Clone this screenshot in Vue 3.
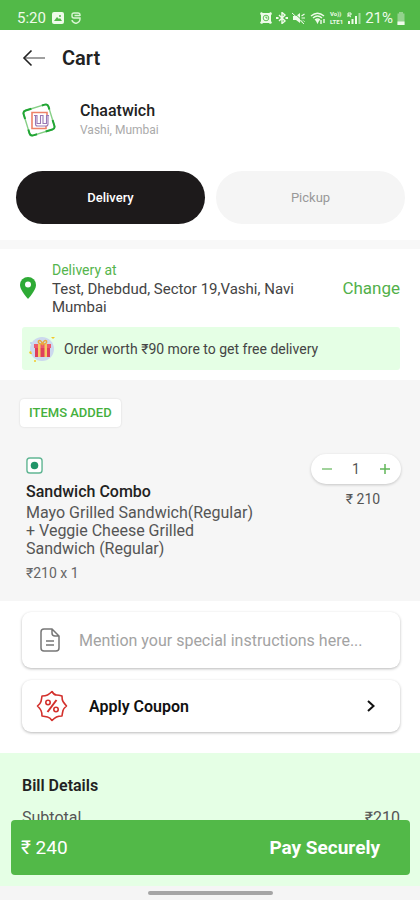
<template>
  <div class="page">
    <!-- 状态栏 -->
    <div class="status-bar">
      <div class="status-group">
        <span class="time">5:20</span>
        <svg class="icon-12" viewBox="0 0 12 12">
          <rect width="12" height="12" rx="2" fill="#effbea" />
          <path d="M2 9l3-4 2 2 1-1 2 3z" fill="#52b948" />
          <circle cx="8" cy="4" r="1" fill="#52b948" />
        </svg>
        <svg class="icon-12" viewBox="0 0 12 12" fill="none" stroke="#d9f5d3" stroke-width="1.4">
          <path d="M10 4V3Q10 1 8 1H4Q2 1 2 3v1q0 2 2 2h6v1q0 3-4 4.500Q2 10 2 8M4.500 3.500H10" />
        </svg>
      </div>
      <div class="status-group right">
        <svg class="icon-12" viewBox="0 0 12 12">
          <path d="M1 0l2 1h6l2-1 1 2-1 1v6l1 2-2 1-1-1H3l-1 1-2-1 1-2V3L0 2z" fill="#effbea" />
          <circle cx="6" cy="6" r="2.800" fill="none" stroke="#52b948" stroke-width="0.900" />
          <path d="M6 4.500V6h1.500" fill="none" stroke="#52b948" />
        </svg>
        <svg class="icon-12" viewBox="0 0 12 12" fill="none" stroke="#effbea" stroke-width="1.4">
          <path d="M3 3l6 6-3 2.500v-11L9 3 3 9" />
          <path d="M0 6h2.500M9.500 6H12" stroke-width="2" />
        </svg>
        <svg class="icon-14" viewBox="0 0 14 12">
          <path d="M1 4h3l4-3v10L4 8H1z" fill="#effbea" />
          <path d="M9.500 4l3-2M9.500 6H13M9.500 8l3 2" fill="none" stroke="#effbea" stroke-width="1.2" />
          <path d="M1 0l12 11" stroke="#52b948" stroke-width="1" />
          <path d="M0 1l12 11" stroke="#effbea" stroke-width="1" />
        </svg>
        <svg class="icon-16" viewBox="0 0 16 12" fill="none" stroke="#effbea" stroke-width="1.4">
          <path d="M1 4q6.500-5.500 13 0M3 6q4.500-4 9 0M5 8q2.500-2 5 0" />
          <path d="M6.500 8.500l1 2 1-2z" fill="#effbea" />
          <path d="M11 8v4M14 7v4" />
        </svg>
        <span class="lte"><span>Vo))</span><span>LTE1</span></span>
        <svg class="icon-14" viewBox="0 0 14 12">
          <path d="M1 5V1h3v2H1l3 2" fill="none" stroke="#effbea" />
          <path d="M1 9h2v3H1zM4.500 7h2v5h-2zM8 4h2v8H8z" fill="#effbea" />
          <path d="M11.500 1h2v11h-2z" fill="#a8dca3" />
        </svg>
        <span class="battery-text">21%</span>
        <svg class="icon-8" viewBox="0 0 8 13">
          <path d="M2 0h4v1.500h1.500V13h-7V1.500H2z" fill="#93d28d" />
          <path d="M.5 9.500h7V13h-7z" fill="#effbea" />
        </svg>
      </div>
    </div>

    <!-- 顶部标题 -->
    <header class="header">
      <button class="back" aria-label="Back">
        <svg viewBox="0 0 24 18" fill="none" stroke-width="1.6">
          <path d="M3 9h20" stroke="#888" />
          <path d="M9.500 1.500L2 9l7.500 7.500" stroke="#222" />
        </svg>
      </button>
      <h1>Cart</h1>
    </header>

    <section class="store">
      <svg class="logo" viewBox="0 0 34 34" fill="none">
        <g transform="rotate(-17 17 17)">
          <rect x="4" y="4" width="26" height="26" rx="3" stroke="#86cf86" stroke-width="1.4" />
          <path d="M4 12V7q0-3 3-3h6M24 4h3q3 0 3 3v3M30 21v6q0 3-3 3h-7M11 30H7q-3 0-3-3v-4" stroke="#21a534" stroke-width="2" />
        </g>
        <path d="M25 13V9.500H10v16h14V23" stroke="#ee8268" stroke-width="1.6" />
        <path d="M12 12.500h3v8h3.500v-8H21v8h3.500v-8H27M13.500 13v8q0 2 2 2H24q2 0 2-2v-8" stroke="#9a78b4" stroke-width="1.1" />
      </svg>
      <div>
        <h2 class="store-name">Chaatwich</h2>
        <p class="store-area">Vashi, Mumbai</p>
      </div>
    </section>

    <div class="tabs">
      <button
        v-for="tab in tabs"
        :key="tab"
        class="tab"
        :class="{ active: tab === currentTab }"
        @click="currentTab = tab"
      >
        {{ tab }}
      </button>
    </div>

    <!-- 配送地址 -->
    <section class="delivery">
      <div class="address-row">
        <svg class="pin" viewBox="0 0 16 22">
          <path d="M8 0a8 8 0 0 0-8 8c0 5.500 8 14 8 14s8-8.500 8-14a8 8 0 0 0-8-8z" fill="#2eaa35" />
          <circle cx="8" cy="7.500" r="3" fill="#fff" />
        </svg>
        <div class="address">
          <p class="address-label">Delivery at</p>
          <p class="address-text">Test, Dhebdud, Sector 19,Vashi, Navi Mumbai</p>
        </div>
        <button class="change">Change</button>
      </div>
      <div class="offer">
        <svg class="gift" viewBox="0 0 28 28">
          <circle cx="14" cy="14" r="12" fill="#ccd9ee" />
          <path d="M7 12h15v10H7z" fill="#de3f5b" />
          <path d="M6 9h17v4H6z" fill="#ec5a6c" />
          <path d="M10 9h2.500v13H10zM16.500 9H19v13h-2.500z" fill="#f4cb62" />
          <path d="M14.500 9q-5 0-4-3 2-2 4 3 2-5 4-3 1 3-4 3z" fill="none" stroke="#eaa83c" stroke-width="1.5" />
          <path d="M23 2h4l-2 2zM1 17l2-1 1 3H2z" fill="#f2c928" />
          <circle cx="7" cy="26" r="1" fill="#f2c928" />
          <circle cx="3" cy="8" r="1" fill="#b8d2ee" />
        </svg>
        <span>Order worth ₹90 more to get free delivery</span>
      </div>
    </section>

    <!-- 已添加商品 -->
    <section class="items">
      <span class="chip">ITEMS ADDED</span>
      <div class="item">
        <div class="item-info">
          <svg class="veg" viewBox="0 0 18 18">
            <rect x="1" y="1" width="16" height="16" rx="3" fill="#fff" stroke="#62b694" stroke-width="1.5" />
            <circle cx="9" cy="9" r="4" fill="#209568" />
          </svg>
          <h3 class="item-name">Sandwich Combo</h3>
          <p class="item-desc">Mayo Grilled Sandwich(Regular) + Veggie Cheese Grilled Sandwich (Regular)</p>
          <p class="item-price">₹{{ price }} x {{ count }}</p>
        </div>
        <div class="item-side">
          <div class="stepper">
            <button aria-label="Decrease" @click="decrease">
              <svg viewBox="0 0 10 10"><path d="M0 5h10" stroke="#82c47b" stroke-width="1.5" /></svg>
            </button>
            <span>{{ count }}</span>
            <button aria-label="Increase" @click="count++">
              <svg viewBox="0 0 10 10"><path d="M0 5h10M5 0v10" stroke="#62b65a" stroke-width="1.5" /></svg>
            </button>
          </div>
          <span class="total">₹ {{ subtotal }}</span>
        </div>
      </div>
    </section>

    <section class="extras">
      <label class="card note">
        <svg class="doc" viewBox="0 0 20 24" fill="none" stroke="#777" stroke-width="1.5">
          <path d="M12 1H4Q1 1 1 4v16q0 3 3 3h12q3 0 3-3V8zM12 1v4q0 3 3 3h4M6 13h8M6 17h8" />
        </svg>
        <input
          v-model="note"
          type="text"
          aria-label="Special instructions"
          placeholder="Mention your special instructions here..."
        />
      </label>
      <button class="card coupon">
        <svg class="badge" viewBox="0 0 32 32" fill="none" stroke="#d3302c" stroke-width="1.6">
          <path d="M16 1.500Q18 5 20.500 5T26 6q0 4 1 5.500t3.500 4.500Q27.500 18.500 27 20.500T26 26q-3.500 0-5.500 1T16 30.500Q14 27.500 11.500 27T6 26q0-3.500-1-5.500T1.500 16Q4.500 13.500 5 11.500T6 6q3.500 0 5.500-1T16 1.500z" stroke-linejoin="round" />
          <path d="M20.500 10l-9 12" stroke-width="2" />
          <circle cx="12" cy="12.500" r="2.200" />
          <circle cx="20" cy="19.500" r="2.200" />
        </svg>
        <span class="coupon-text">Apply Coupon</span>
        <svg class="chevron" viewBox="0 0 8 12" fill="none" stroke="#111" stroke-width="2">
          <path d="M1 1l5.500 5L1 11" />
        </svg>
      </button>
    </section>

    <!-- 账单 -->
    <section class="bill">
      <h3>Bill Details</h3>
      <div class="bill-row">
        <span>Subtotal</span>
        <span>₹{{ subtotal }}</span>
      </div>
    </section>

    <!-- 底部支付按钮 -->
    <div class="footer">
      <button class="pay">
        <span class="pay-amount">₹ {{ subtotal + charges }}</span>
        <span class="pay-text">Pay Securely</span>
      </button>
      <div class="nav"><span class="nav-handle"></span></div>
    </div>
  </div>
</template>

<script setup>
import { ref, computed } from 'vue'

const tabs = ['Delivery', 'Pickup']
const currentTab = ref('Delivery')

const price = 210
const charges = 30 // 配送及其他费用
const count = ref(1)
const note = ref('')

const subtotal = computed(() => price * count.value)

function decrease() {
  if (count.value > 1) count.value--
}
</script>

<style>
body {
  margin: 0;
  background: #fff;
}
</style>

<style scoped>
.page {
  display: flex;
  flex-direction: column;
  min-height: 100vh;
  font-family: Roboto, "Liberation Sans", sans-serif;
  color: #222;
}

h1,
h2,
h3,
p {
  margin: 0;
}

button {
  padding: 0;
  border: none;
  background: none;
  font-family: inherit;
  color: inherit;
  cursor: pointer;
}

svg {
  display: block;
  flex-shrink: 0;
}

/* 状态栏 */
.status-bar {
  display: flex;
  justify-content: space-between;
  align-items: center;
  box-sizing: border-box;
  height: 30px;
  padding: 6px 15px 0 17px;
  background: #52b948;
  color: #effbea;
}

.status-group {
  display: flex;
  align-items: center;
  gap: 6px;
}

.status-group.right {
  gap: 4px;
}

.time,
.battery-text {
  font-size: 15px;
  line-height: 18px;
}

.icon-8 {
  width: 8px;
  height: 13px;
}

.icon-12 {
  width: 12px;
  height: 12px;
}

.icon-14 {
  width: 14px;
  height: 12px;
}

.icon-16 {
  width: 16px;
  height: 12px;
}

.lte {
  display: flex;
  flex-direction: column;
  font-size: 6px;
  line-height: 8px;
  font-weight: 700;
}

/* 标题 */
.header {
  display: flex;
  align-items: center;
  gap: 16px;
  height: 55px;
  padding: 0 22px;
}

.back svg {
  width: 24px;
  height: 18px;
}

h1 {
  font-size: 20px;
  line-height: 24px;
  font-weight: 600;
}

.store {
  display: flex;
  align-items: center;
  gap: 24px;
  padding: 16px 22px 0;
}

.logo {
  width: 34px;
  height: 34px;
}

.store-name {
  font-size: 16px;
  line-height: 20px;
  font-weight: 500;
}

.store-area {
  font-size: 12px;
  line-height: 18px;
  color: #aaa;
}

.tabs {
  display: flex;
  gap: 11px;
  padding: 32px 15px 16px 16px;
}

.tab {
  flex: 1;
  height: 53px;
  border-radius: 27px;
  background: #f5f5f5;
  font-size: 13px;
  color: #999;
}

.tab.active {
  background: #1d1a1b;
  color: #fff;
  font-weight: 500;
}

/* 地址 */
.delivery {
  padding: 11px 20px 10px;
  border-top: 9px solid #f8f8f8;
}

.address-row {
  display: flex;
  align-items: center;
  gap: 16px;
}

.pin {
  width: 16px;
  height: 22px;
}

.address {
  flex: 1;
}

.address-label {
  font-size: 14px;
  line-height: 20px;
  color: #55b54d;
}

.address-text {
  font-size: 15px;
  line-height: 18px;
  color: #444;
}

.change {
  font-size: 17px;
  color: #52b04a;
}

.offer {
  display: flex;
  align-items: center;
  gap: 8px;
  height: 43px;
  margin: 11px 0 0 2px;
  padding-left: 6px;
  border-radius: 3px;
  background: #e5ffe5;
  font-size: 14px;
  color: #444;
}

.gift {
  width: 28px;
  height: 28px;
}

/* 商品 */
.items {
  padding: 19px 19px 19px 20px;
  background: #f6f6f6;
}

.chip {
  display: inline-block;
  padding: 0 9px;
  border-radius: 4px;
  background: #fff;
  box-shadow: 0 0 2px rgba(0, 0, 0, 0.15);
  font-size: 13px;
  line-height: 28px;
  font-weight: 500;
  color: #45b03d;
}

.item {
  display: flex;
  justify-content: space-between;
  margin-top: 27px;
  padding-left: 6px;
}

.item-info {
  width: 232px;
  padding-top: 3px;
}

.veg {
  width: 17px;
  height: 17px;
}

.item-name {
  margin-top: 8px;
  font-size: 16px;
  line-height: 20px;
  font-weight: 500;
}

.item-desc {
  margin-top: 2px;
  font-size: 16px;
  line-height: 18px;
  color: #555;
}

.item-price {
  margin-top: 6px;
  font-size: 14px;
  line-height: 18px;
  color: #666;
}

.item-side {
  display: flex;
  flex-direction: column;
  align-items: center;
  gap: 6px;
}

.stepper {
  display: flex;
  align-items: center;
  justify-content: space-between;
  box-sizing: border-box;
  width: 90px;
  height: 30px;
  padding: 0 11px;
  border-radius: 15px;
  background: #fff;
  box-shadow: 0 1px 3px rgba(0, 0, 0, 0.2);
  font-size: 14px;
  color: #555;
}

.stepper svg {
  width: 10px;
  height: 10px;
}

.total {
  padding-left: 14px;
  font-size: 14px;
  line-height: 18px;
  color: #555;
}

/* 备注与优惠券 */
.extras {
  display: flex;
  flex-direction: column;
  gap: 12px;
  padding: 11px 20px 21px 22px;
}

.card {
  display: flex;
  align-items: center;
  box-sizing: border-box;
  width: 100%;
  border-radius: 9px;
  background: #fff;
  box-shadow: 0 1px 3px rgba(0, 0, 0, 0.28);
}

.note {
  gap: 19px;
  height: 56px;
  padding: 0 18px;
}

.doc {
  width: 20px;
  height: 24px;
}

.note input {
  flex: 1;
  min-width: 0;
  padding: 0;
  border: none;
  outline: none;
  background: none;
  font-family: inherit;
  font-size: 16px;
  color: #333;
}

.note input::placeholder {
  color: #a3a3a3;
  opacity: 1;
}

.coupon {
  gap: 21px;
  height: 52px;
  padding: 0 25px 0 14px;
}

.badge {
  width: 32px;
  height: 32px;
}

.coupon-text {
  flex: 1;
  text-align: left;
  font-size: 16px;
  font-weight: 600;
  color: #111;
}

.chevron {
  width: 8px;
  height: 12px;
}

/* 账单 */
.bill {
  flex: 1;
  padding: 22px 20px 60px 22px;
  background: #e5ffe5;
}

.bill h3 {
  font-size: 16px;
  line-height: 22px;
  font-weight: 600;
}

.bill-row {
  display: flex;
  justify-content: space-between;
  margin-top: 11px;
  font-size: 16px;
  line-height: 20px;
  color: #555;
}

/* 底部悬浮 */
.footer {
  position: fixed;
  left: 0;
  right: 0;
  bottom: 0;
}

.pay {
  display: flex;
  align-items: center;
  justify-content: space-between;
  width: calc(100% - 21px);
  height: 55px;
  margin: 0 10px 11px 11px;
  padding: 0 30px 0 10px;
  border-radius: 4px;
  background: #52b948;
  color: #fff;
}

.pay-amount {
  font-size: 19px;
}

.pay-text {
  font-size: 19px;
  font-weight: 700;
}

.nav {
  display: flex;
  align-items: center;
  justify-content: center;
  height: 14px;
  background: #f5f5f5;
}

.nav-handle {
  width: 125px;
  height: 4px;
  border-radius: 2px;
  background: #a5a5a5;
}
</style>
